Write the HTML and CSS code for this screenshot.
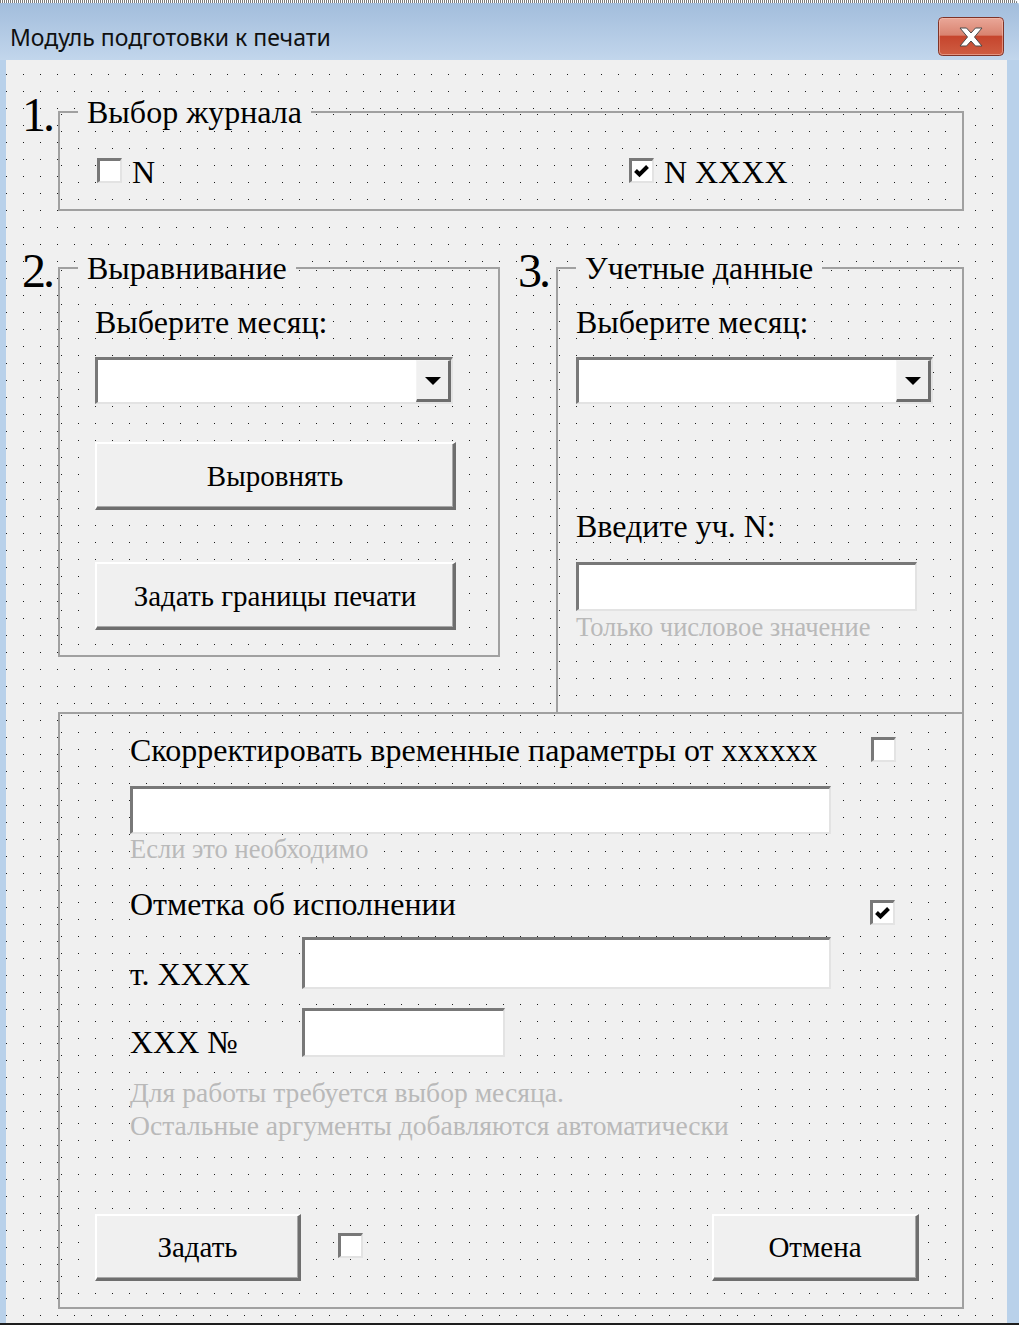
FILE: index.html
```html
<!DOCTYPE html>
<html lang="ru">
<head>
<meta charset="utf-8">
<title>Модуль подготовки к печати</title>
<link rel="stylesheet" href="styles.css">
</head>
<body>
<div class="window">
  <div class="strip"></div>
  <div class="titlebar">
    <span class="title">Модуль подготовки к печати</span>
    <div class="close">
      <svg width="66" height="39" viewBox="0 0 66 39">
        <defs>
          <linearGradient id="cg" x1="0" y1="0" x2="0" y2="1">
            <stop offset="0" stop-color="#eaa899"/>
            <stop offset="0.46" stop-color="#d98370"/>
            <stop offset="0.5" stop-color="#c6452d"/>
            <stop offset="1" stop-color="#cf5e43"/>
          </linearGradient>
        </defs>
        <rect x="0.5" y="0.5" width="65" height="38" rx="4" fill="url(#cg)" stroke="#7f3327"/>
        <rect x="1.5" y="1.5" width="63" height="36" rx="3" fill="none" stroke="#f6c2b6" stroke-opacity="0.55"/>
        <polygon points="22,11 28.5,11 33,16 37.5,11 44,11 36.5,20 44,29 37.5,29 33,24 28.5,29 22,29 29.5,20" fill="#ffffff" stroke="#4a4a4a" stroke-width="1" stroke-linejoin="round"/>
      </svg>
    </div>
  </div>
  <div class="client dots">
    <div class="row row1">
      <div class="num">1.</div>
      <fieldset class="frame f1">
        <legend>Выбор журнала</legend>
        <div class="checks">
          <div class="check"><span class="box"></span><span class="chk-label">N</span></div>
          <div class="check"><span class="box checked"><svg width="20" height="20" viewBox="0 0 20 20"><path d="M3.5 9.5 L7.5 13.5 L15.5 5.5" fill="none" stroke="#000" stroke-width="4"/></svg></span><span class="chk-label">N XXXX</span></div>
        </div>
      </fieldset>
    </div>

    <div class="row row2">
      <div class="num">2.</div>
      <fieldset class="frame f2">
        <legend>Выравнивание</legend>
        <div class="lbl lbl-month">Выберите месяц:</div>
        <div class="combo c2"><span class="combo-field"></span><span class="combo-btn"><span class="arrow"></span></span></div>
        <div class="btn btn-align">Выровнять</div>
        <div class="btn btn-bounds">Задать границы печати</div>
      </fieldset>
      <div class="num num3">3.</div>
      <fieldset class="frame f3">
        <legend>Учетные данные</legend>
        <div class="lbl lbl-month">Выберите месяц:</div>
        <div class="combo c3"><span class="combo-field"></span><span class="combo-btn"><span class="arrow"></span></span></div>
        <div class="lbl lbl-uch">Введите уч. N:</div>
        <div class="textbox tb-uch"></div>
        <div class="hint hint-uch">Только числовое значение</div>
      </fieldset>
    </div>

    <div class="frame f4">
      <div class="line line-a">
        <div class="lbl lbl-wide">Скорректировать временные параметры от хххххх</div>
        <span class="box box-a"></span>
      </div>
      <div class="textbox tb-corr"></div>
      <div class="hint hint-corr">Если это необходимо</div>
      <div class="line line-d">
        <div class="lbl lbl-mark">Отметка об исполнении</div>
        <span class="box box-d checked"><svg width="20" height="20" viewBox="0 0 20 20"><path d="M3.5 9.5 L7.5 13.5 L15.5 5.5" fill="none" stroke="#000" stroke-width="4"/></svg></span>
      </div>
      <div class="line line-e">
        <div class="lbl lbl-t">т. XXXX</div>
        <div class="textbox tb-t"></div>
      </div>
      <div class="line line-f">
        <div class="lbl lbl-t lbl-no">XXX №</div>
        <div class="textbox tb-no"></div>
      </div>
      <div class="hint hint-big">Для работы требуется выбор месяца.<br>Остальные аргументы добавляются автоматически</div>
      <div class="line line-h">
        <div class="btn btn-set">Задать</div>
        <span class="box box-h"></span>
        <div class="btn btn-cancel">Отмена</div>
      </div>
    </div>
  </div>
  <div class="bottomline"></div>
</div>
</body>
</html>
```

FILE: styles.css
```css
* { box-sizing: border-box; }

body {
  margin: 0;
  background: #ffffff;
}

.window {
  width: 1019px;
  height: 1325px;
  background: #b9d1ea;
  display: flex;
  flex-direction: column;
  overflow: hidden;
  border-top-right-radius: 6px;
}

.strip {
  height: 3px;
  flex: none;
  background: repeating-linear-gradient(90deg, #7a7a7a 0 1px, #ffffff 1px 2px);
}

.titlebar {
  height: 57px;
  flex: none;
  background: linear-gradient(#a2bddc, #c2d6ec);
  display: flex;
  align-items: flex-start;
  padding-left: 10px;
}

.title {
  font-family: "Noto Sans", "DejaVu Sans", sans-serif;
  font-size: 23px;
  line-height: 28px;
  margin-top: 20px;
  color: #101010;
}

.close {
  margin-left: auto;
  margin-right: 15px;
  margin-top: 14px;
  width: 66px;
  height: 39px;
}
.close svg { display: block; }

.dots {
  background-color: #f0f0f0;
  background-image: conic-gradient(from 0deg at 1px 1px, transparent 0 75%, #1c1c1c 75% 100%);
  background-size: 17px 17px;
}

.client {
  margin-left: 6px;
  width: 1001px;
  height: 1263px;
  flex: none;
  background-position: 0 14px;
  padding-top: 36px;
  font-family: "Liberation Serif", "Times New Roman", serif;
  color: #000;
}

.bottomline {
  height: 2px;
  flex: none;
  background: #1e1e1e;
}

.row {
  display: flex;
  align-items: flex-start;
}

.row2 { margin-top: 41px; }

.num {
  width: 52px;
  flex: none;
  font-size: 48px;
  line-height: 48px;
  letter-spacing: -3px;
  padding-left: 16px;
  margin-top: -5px;
}

.num3 {
  width: 56px;
  padding-left: 18px;
}

.frame {
  margin: 0;
  padding: 0;
  min-width: 0;
  border: 2px solid #a0a0a0;
  background-color: #f0f0f0;
  background-image: conic-gradient(from 0deg at 1px 1px, transparent 0 75%, #1c1c1c 75% 100%);
  background-size: 17px 17px;
  background-position: 1px 1px;
}

legend {
  font-size: 32px;
  line-height: 32px;
  margin-left: 18px;
  padding: 0 9px;
  background: #f0f0f0;
}

.f1 { width: 906px; }

.checks {
  display: grid;
  grid-template-columns: 532px auto;
  padding-left: 37px;
  margin-top: 30px;
  margin-bottom: 26px;
  height: 25px;
}

.check {
  display: flex;
  align-items: flex-start;
  height: 25px;
}

.box {
  width: 25px;
  height: 25px;
  flex: none;
  display: block;
  background: #ffffff;
  border-style: solid;
  border-width: 3px 2px 2px 3px;
  border-color: #787878 #e3e3e3 #e3e3e3 #787878;
}
.box svg { display: block; }

.chk-label {
  font-size: 32px;
  line-height: 25px;
  margin-top: 2px;
  margin-left: 10px;
  background: #f0f0f0;
  white-space: nowrap;
}

.f2 {
  width: 442px;
  flex: none;
  padding: 0 0 25px 35px;
}
.f2 legend { margin-left: -17px; }

.f3 {
  width: 408px;
  height: 460px;
  flex: none;
  border-bottom: none;
  padding-left: 18px;
}
.f3 legend { margin-left: 0; }

.lbl {
  font-size: 32px;
  line-height: 32px;
  white-space: nowrap;
  background: #f0f0f0;
}

.lbl-month {
  margin-top: 22px;
  width: max-content;
}

.combo {
  margin-top: 19px;
  height: 47px;
  display: flex;
  border-style: solid;
  border-width: 3px 2px 2px 3px;
  border-color: #787878 #e3e3e3 #e3e3e3 #787878;
  background: #ffffff;
}
.c2 { width: 358px; }
.c3 { width: 357px; }

.combo-field { flex: 1; }

.combo-btn {
  width: 35px;
  flex: none;
  background: #f0f0f0;
  border-style: solid;
  border-width: 1px 3px 3px 1px;
  border-color: #f4f4f4 #6d6d6d #6d6d6d #f4f4f4;
  display: flex;
  align-items: center;
  justify-content: center;
}

.arrow {
  width: 0;
  height: 0;
  border-left: 8px solid transparent;
  border-right: 8px solid transparent;
  border-top: 8px solid #000;
  margin-top: 1px;
}

.btn {
  display: flex;
  align-items: center;
  justify-content: center;
  background: #f0f0f0;
  border-style: solid;
  border-width: 2px 3px 3px 2px;
  border-color: #ffffff #6e6e6e #6e6e6e #ffffff;
  box-shadow: inset -1px -1px 0 #a8a8a8;
  font-size: 29px;
  line-height: 32px;
  white-space: nowrap;
}

.btn-align {
  width: 361px;
  height: 68px;
  margin-top: 38px;
}

.btn-bounds {
  width: 361px;
  height: 68px;
  margin-top: 52px;
}

.lbl-uch {
  margin-top: 106px;
  width: max-content;
}

.textbox {
  background: #ffffff;
  border-style: solid;
  border-width: 3px 2px 2px 3px;
  border-color: #787878 #e3e3e3 #e3e3e3 #787878;
}

.tb-uch {
  width: 341px;
  height: 49px;
  margin-top: 20px;
}

.hint {
  color: #b9b9b9;
  font-size: 26.5px;
  line-height: 28px;
  white-space: nowrap;
  background: #f0f0f0;
  width: max-content;
}

.hint-uch { margin-top: 2px; }

.f4 {
  width: 906px;
  height: 597px;
  margin-left: 52px;
}

.line {
  display: flex;
  align-items: flex-start;
  margin-left: 70px;
}

.line-a {
  margin-top: 20px;
  height: 33px;
}
.lbl-wide { width: 741px; }
.box-a { margin-top: 3px; }

.tb-corr {
  margin-left: 70px;
  margin-top: 19px;
  width: 701px;
  height: 48px;
}

.hint-corr {
  margin-left: 70px;
  margin-top: 1px;
}

.line-d {
  margin-top: 25px;
  height: 37px;
}
.lbl-mark { width: 740px; }
.box-d { margin-top: 12px; }

.line-e {
  margin-top: 12px;
  height: 52px;
}
.lbl-t {
  width: 172px;
  margin-top: 21px;
}
.tb-t {
  width: 529px;
  height: 52px;
}

.line-f {
  margin-top: 19px;
  height: 49px;
}
.lbl-no { margin-top: 18px; }
.tb-no {
  width: 203px;
  height: 49px;
}

.hint-big {
  margin-left: 70px;
  margin-top: 19px;
  font-size: 27.6px;
  line-height: 33px;
}

.line-h {
  margin-left: 35px;
  margin-top: 72px;
  height: 67px;
}

.btn-set {
  width: 206px;
  height: 67px;
}

.box-h {
  margin-left: 37px;
  margin-top: 19px;
}

.btn-cancel {
  width: 207px;
  height: 67px;
  margin-left: 349px;
}
```
